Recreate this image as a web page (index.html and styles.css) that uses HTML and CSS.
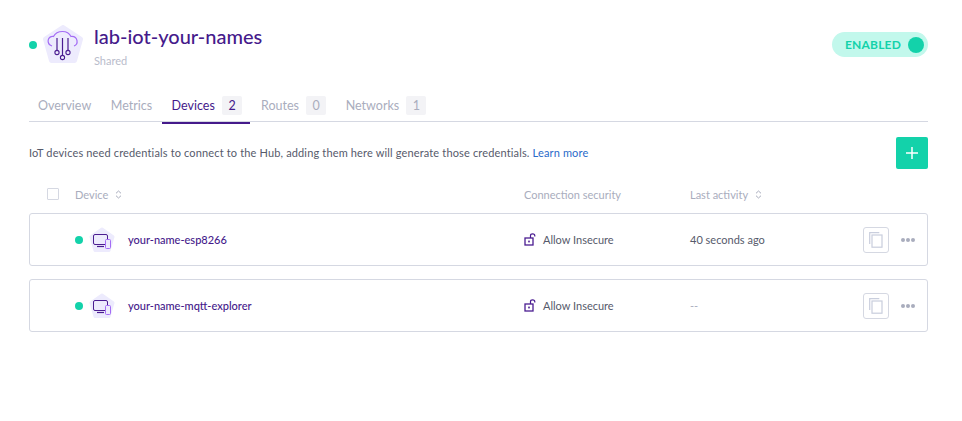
FILE: index.html
```html
<!DOCTYPE html>
<html lang="en">
<head>
  <meta charset="UTF-8">
  <meta name="viewport" content="width=device-width, initial-scale=1.0">
  <title>lab-iot-your-names</title>
  <link rel="stylesheet" href="styles.css">
</head>
<body>
  <svg class="defs" width="0" height="0">
    <symbol id="device-icon" viewBox="0 0 26 26">
      <path d="M13 2 24 9.800 20 23.500H6L2 9.800Z" fill="#edebfd" stroke="#edebfd" stroke-width="3" stroke-linejoin="round"/>
      <rect x="4.500" y="7.500" width="14" height="10" rx="1.500" fill="none" stroke="#4b1d91" stroke-width="1"/>
      <path d="M8 19.500h7" stroke="#4b1d91" stroke-width="1.200"/>
      <rect x="16.500" y="12.500" width="5" height="9" rx="1" fill="#edebfd" stroke="#a46cf5" stroke-width="1"/>
    </symbol>
    <symbol id="lock-icon" viewBox="0 0 13 13">
      <rect x="1" y="5" width="8" height="7" fill="none" stroke="#4b1d91" stroke-width="1.300"/>
      <rect x="4.200" y="7.600" width="1.600" height="1.800" fill="#4b1d91"/>
      <path d="M6.500 5V2.600C6.500 1.400 7.300.8 8.600.8s2.200.7 2.200 1.900v.8" fill="none" stroke="#4b1d91" stroke-width="1.200"/>
    </symbol>
    <symbol id="copy-icon" viewBox="0 0 14 16">
      <path d="M.7 12V.7h9.600" fill="none" stroke="#c9cedd" stroke-width="1.200"/>
      <rect x="3" y="3" width="10" height="12.200" fill="none" stroke="#c9cedd" stroke-width="1.200"/>
    </symbol>
    <symbol id="sort-icon" viewBox="0 0 7 9">
      <path d="M1 3.300 3.500 1 6 3.300M1 5.700 3.500 8 6 5.700" fill="none" stroke="#a9adbd" stroke-width="1"/>
    </symbol>
  </svg>

  <div class="page">
    <header class="header">
      <div class="hub">
        <span class="dot"></span>
        <svg class="hub-icon" width="40" height="38" viewBox="0 0 40 38">
          <path d="M20 2.500 37.500 14 31.500 35.500H8.500L2.500 14Z" fill="#edebfd" stroke="#edebfd" stroke-width="5" stroke-linejoin="round"/>
          <path d="M9 21C6 20 4.800 17.500 5.200 15 5.700 12.500 8 11 10.500 11.500 12 8.500 15.500 6.500 19.500 6.500c4 0 7 2 8.500 5 3-.3 5.500 1.500 6 4.200.4 2.300-.8 4.500-3 5.300" fill="none" stroke="#a46cf5" stroke-width="1.200"/>
          <path d="M14 13v12.500M19.500 13v17.500M25 13v12.500" stroke="#4b1d91" stroke-width="1.200"/>
          <circle cx="14" cy="27.500" r="2.100" fill="#edebfd" stroke="#4b1d91" stroke-width="1.100"/>
          <circle cx="19.500" cy="32.500" r="2.100" fill="#edebfd" stroke="#4b1d91" stroke-width="1.100"/>
          <circle cx="25" cy="27.500" r="2.100" fill="#edebfd" stroke="#4b1d91" stroke-width="1.100"/>
        </svg>
        <div class="hub-text">
          <h1>lab-iot-your-names</h1>
          <p>Shared</p>
        </div>
      </div>
      <div class="toggle">
        <span>ENABLED</span>
        <i></i>
      </div>
    </header>

    <nav class="tabs">
      <a class="tab">Overview</a>
      <a class="tab">Metrics</a>
      <a class="tab active">Devices <b>2</b></a>
      <a class="tab">Routes <b>0</b></a>
      <a class="tab">Networks <b>1</b></a>
    </nav>

    <div class="intro">
      <p>IoT devices need credentials to connect to the Hub, adding them here will generate those credentials. <a href="#">Learn more</a></p>
      <button class="add" type="button">
        <svg width="12" height="12" viewBox="0 0 12 12"><path d="M6 0v12M0 6h12" stroke="#fff" stroke-width="1.500"/></svg>
      </button>
    </div>

    <div class="table-head">
      <span class="check"></span>
      <span>Device <svg width="7" height="9"><use href="#sort-icon"/></svg></span>
      <span>Connection security</span>
      <span>Last activity <svg width="7" height="9"><use href="#sort-icon"/></svg></span>
    </div>

    <div class="row">
      <span class="dot"></span>
      <svg class="dev-icon" width="26" height="26"><use href="#device-icon"/></svg>
      <a class="name">your-name-esp8266</a>
      <span class="security"><svg width="13" height="13"><use href="#lock-icon"/></svg>Allow Insecure</span>
      <span class="activity">40 seconds ago</span>
      <span class="copy"><svg width="14" height="16"><use href="#copy-icon"/></svg></span>
      <span class="more"><i></i><i></i><i></i></span>
    </div>

    <div class="row">
      <span class="dot"></span>
      <svg class="dev-icon" width="26" height="26"><use href="#device-icon"/></svg>
      <a class="name">your-name-mqtt-explorer</a>
      <span class="security"><svg width="13" height="13"><use href="#lock-icon"/></svg>Allow Insecure</span>
      <span class="activity empty">--</span>
      <span class="copy"><svg width="14" height="16"><use href="#copy-icon"/></svg></span>
      <span class="more"><i></i><i></i><i></i></span>
    </div>
  </div>
</body>
</html>
```

FILE: styles.css
```css
body {
  font-family: Lato, "Open Sans", sans-serif;
  background-color: #fff;
  color: #565a6b;
  margin: 0;
}
.defs {
  display: block;
  height: 0;
}
.page {
  width: 899px;
  margin-left: 29px;
  padding-top: 24px;
}
.dot {
  display: block;
  flex: none;
  width: 8px;
  height: 8px;
  border-radius: 50%;
  background-color: #13d2aa;
}
.header {
  display: flex;
  justify-content: space-between;
  align-items: flex-start;
  height: 71px;
}
.hub {
  display: flex;
  align-items: flex-start;
}
.hub .dot {
  margin-top: 17px;
}
.hub-icon {
  margin-top: 1px;
  margin-left: 6px;
  margin-right: 11px;
}
.hub-text h1 {
  margin: 0;
  font-size: 20px;
  font-weight: 500;
  line-height: 25px;
  color: #451a8b;
}
.hub-text p {
  margin: 5px 0 0;
  font-size: 11px;
  line-height: 14px;
  color: #b9bccb;
}
.toggle {
  display: flex;
  align-items: center;
  justify-content: space-between;
  width: 96px;
  height: 25px;
  margin-top: 8px;
  padding: 0 4px 0 13px;
  box-sizing: border-box;
  border-radius: 13px;
  background-color: #c2f8ec;
}
.toggle span {
  font-size: 12px;
  font-weight: 700;
  letter-spacing: 0.2px;
  color: #13d2aa;
}
.toggle i {
  width: 16px;
  height: 16px;
  border-radius: 50%;
  background-color: #13d2aa;
}
.tabs {
  display: flex;
  height: 26px;
  border-bottom: 1px solid #d5d8e2;
}
.tab {
  display: flex;
  align-items: center;
  box-sizing: border-box;
  height: 26px;
  padding: 0 9.5px 6px 10px;
  font-size: 12.5px;
  color: #a9adbd;
  white-space: pre;
}
.tab:first-child {
  margin-left: -1px;
}
.tab b {
  width: 20px;
  height: 19px;
  margin-left: 4px;
  border-radius: 2px;
  font-weight: 400;
  line-height: 19px;
  text-align: center;
  background-color: #f3f3f6;
}
.tab.active {
  height: 29px;
  margin-right: 1px;
  padding-right: 8px;
  color: #451a8b;
  border-bottom: 2px solid #451a8b;
}
.intro {
  display: flex;
  justify-content: space-between;
  align-items: center;
  margin-top: 15px;
}
.intro p {
  margin: -2px 0 0;
  font-size: 11px;
  letter-spacing: 0.15px;
}
.intro a {
  color: #2a6ac9;
  text-decoration: none;
}
.add {
  display: flex;
  align-items: center;
  justify-content: center;
  width: 32px;
  height: 32px;
  padding: 0;
  border: none;
  border-radius: 2px;
  background-color: #13d2aa;
}
.table-head, .row {
  display: grid;
  align-items: center;
}
.table-head {
  grid-template-columns: 46px 449px 166px 1fr;
  box-sizing: border-box;
  height: 44px;
  padding-top: 6px;
  font-size: 11px;
  color: #a9adbd;
}
.check {
  width: 10px;
  height: 10px;
  margin-left: 18px;
  border: 1px solid #d5d8e2;
  border-radius: 1px;
}
.table-head svg {
  margin-left: 4px;
}
.row {
  grid-template-columns: 14px 39px 396px 166px 173px 26px 1fr;
  height: 51px;
  margin-bottom: 13px;
  padding-left: 45px;
  border: 1px solid #d5d8e2;
  border-radius: 3px;
  font-size: 11px;
}
.dev-icon {
  display: block;
}
.name {
  font-weight: 500;
  color: #451a8b;
}
.security {
  display: flex;
  align-items: center;
  gap: 6px;
}
.empty {
  color: #a9adbd;
}
.copy {
  display: flex;
  align-items: center;
  justify-content: center;
  width: 24px;
  height: 24px;
  border: 1px solid #d5d8e2;
  border-radius: 3px;
}
.more {
  display: flex;
  gap: 1px;
  margin-left: 12px;
}
.more i {
  width: 4px;
  height: 4px;
  border-radius: 50%;
  background-color: #a9adbd;
}
```
